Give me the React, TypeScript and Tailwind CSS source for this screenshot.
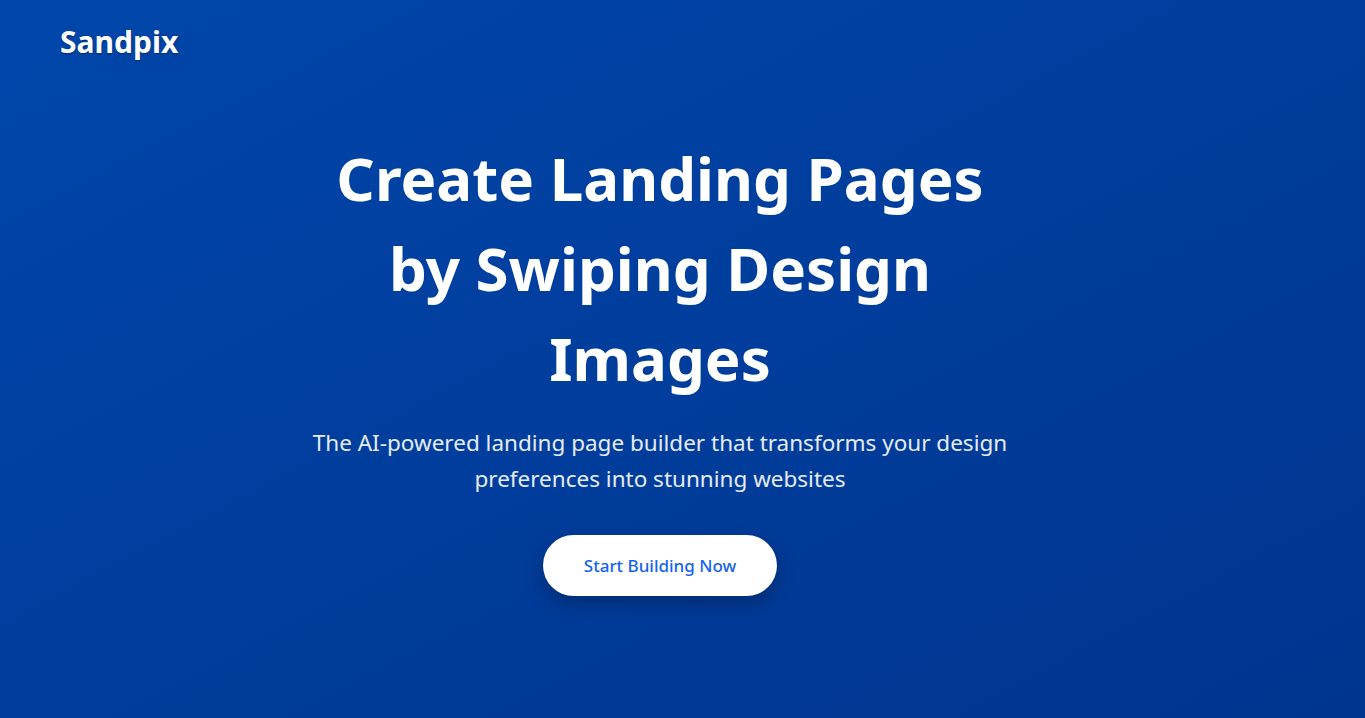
export default function App() {
  return (
    <div
      className="min-h-screen w-full bg-gradient-to-br from-[#0046aa] to-[#00358f] text-white"
      style={{ fontFamily: '"Noto Sans", "Open Sans", sans-serif' }}
    >
      <header className="px-[60px] pt-[20px]">
        <span className="text-[30px] font-bold leading-[44px] [text-shadow:0_1px_2px_rgba(0,0,0,0.35)]">
          Sandpix
        </span>
      </header>

      <main className="flex flex-col items-center pl-8 pr-[77px] pt-[69px] text-center">
        <h1 className="max-w-[700px] text-[60px] font-bold leading-[90px]">
          Create Landing Pages by Swiping Design Images
        </h1>
        <p className="mt-[22px] max-w-[720px] text-[22.5px] leading-[36px] text-white/90">
          The AI-powered landing page builder that transforms your design preferences into stunning websites
        </p>
        <button className="mt-[38px] h-[61px] rounded-full bg-white px-[41px] text-[17px] font-medium text-[#1463f0] shadow-[0_8px_20px_rgba(0,0,0,0.25)]">
          Start Building Now
        </button>
      </main>
    </div>
  );
}
